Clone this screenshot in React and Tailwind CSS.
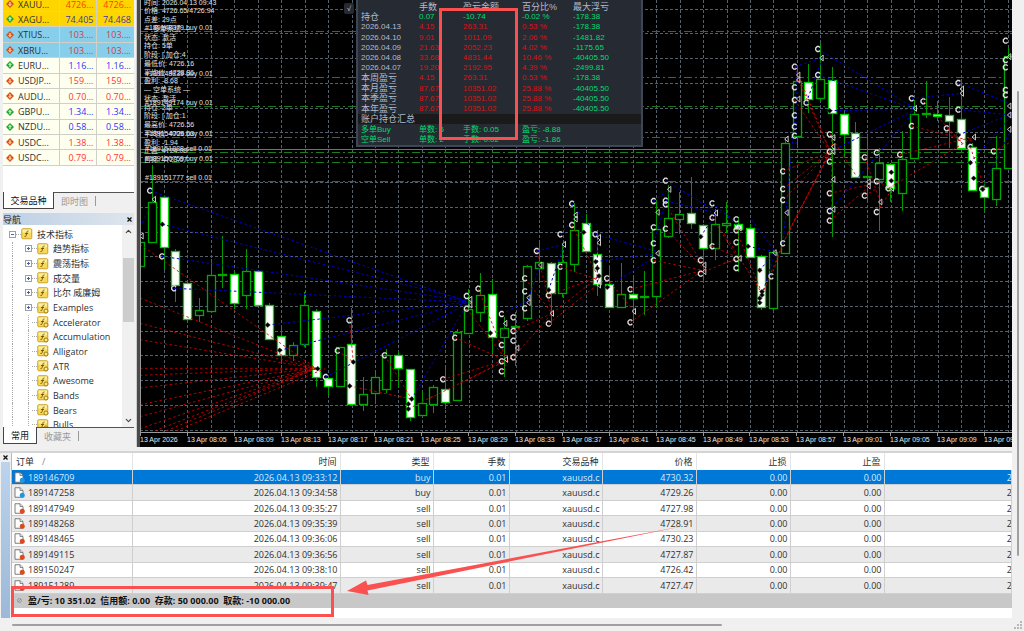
import React from 'react';
import { ChevronUp, ChevronDown } from 'lucide-react';

const quotes = [
  { name: 'XAUU...', bid: '4726...', ask: '4726...', up: false, row: 'bg-[#ffd500]', price: 'text-[#ff3c00]' },
  { name: 'XAGU...', bid: '74.405', ask: '74.468', up: true, row: 'bg-[#ffd500]', price: 'text-[#3a3a9e]' },
  { name: 'XTIUS...', bid: '103....', ask: '103....', up: false, row: 'bg-[#87ceeb]', price: 'text-[#d83a4a]' },
  { name: 'XBRU...', bid: '103....', ask: '103....', up: false, row: 'bg-[#87ceeb]', price: 'text-[#d83a4a]' },
  { name: 'EURU...', bid: '1.16...', ask: '1.16...', up: true, row: 'bg-[#fffff0]', price: 'text-[#3232ff]' },
  { name: 'USDJP...', bid: '159....', ask: '159....', up: false, row: 'bg-[#fffff0]', price: 'text-[#ff3232]' },
  { name: 'AUDU...', bid: '0.70...', ask: '0.70...', up: false, row: 'bg-[#fffff0]', price: 'text-[#ff3232]' },
  { name: 'GBPU...', bid: '1.34...', ask: '1.34...', up: true, row: 'bg-[#fffff0]', price: 'text-[#3232ff]' },
  { name: 'NZDU...', bid: '0.58...', ask: '0.58...', up: true, row: 'bg-[#fffff0]', price: 'text-[#3232ff]' },
  { name: 'USDC...', bid: '1.38...', ask: '1.38...', up: false, row: 'bg-[#fffff0]', price: 'text-[#ff3232]' },
  { name: 'USDC...', bid: '0.79...', ask: '0.79...', up: false, row: 'bg-[#fffff0]', price: 'text-[#ff3232]' },
];

const indicators = [
  { name: '趋势指标', folder: true, expandable: true },
  { name: '震荡指标', folder: true, expandable: true },
  { name: '成交量', folder: true, expandable: true },
  { name: '比尔 威廉姆', folder: true, expandable: true },
  { name: 'Examples', expandable: true },
  { name: 'Accelerator' },
  { name: 'Accumulation' },
  { name: 'Alligator' },
  { name: 'ATR' },
  { name: 'Awesome' },
  { name: 'Bands' },
  { name: 'Bears' },
  { name: 'Bulls' },
];

const stats = [
  ['2026.04.13', '4.15', '263.31', '0.53 %', '-178.38'],
  ['2026.04.10', '9.01', '1011.09', '2.06 %', '-1481.82'],
  ['2026.04.09', '21.63', '2052.23', '4.02 %', '-1175.65'],
  ['2026.04.08', '33.68', '4831.44', '10.46 %', '-40405.50'],
  ['2026.04.07', '19.20', '2192.95', '4.39 %', '-2499.81'],
  ['本周盈亏', '4.15', '263.31', '0.53 %', '-178.38'],
  ['本月盈亏', '87.67', '10351.02', '25.88 %', '-40405.50'],
  ['本季盈亏', '87.67', '10351.02', '25.88 %', '-40405.50'],
  ['本年盈亏', '87.67', '10351.02', '25.88 %', '-40405.50'],
];

const orders = [
  ['189146709', '2026.04.13 09:33:12', 'buy', '4730.32'],
  ['189147258', '2026.04.13 09:34:58', 'buy', '4729.26'],
  ['189147949', '2026.04.13 09:35:27', 'sell', '4727.98'],
  ['189148268', '2026.04.13 09:35:39', 'sell', '4728.91'],
  ['189148465', '2026.04.13 09:36:06', 'sell', '4730.23'],
  ['189149115', '2026.04.13 09:36:56', 'sell', '4727.87'],
  ['189150247', '2026.04.13 09:38:10', 'sell', '4726.42'],
  ['189151289', '2026.04.13 09:39:47', 'sell', '4727.47'],
];

const orderHeads = ['时间', '类型', '手数', '交易品种', '价格', '止损', '止盈'];

// [body top, body bottom, high, low, falling]
const candles = [
  [242, 266, 227, 279, 0], [202, 242, 165, 242, 0], [197, 247, 195, 270, 1], [251, 285, 249, 302, 1],
  [283, 319, 281, 319, 1], [310, 315, 298, 322, 0], [275, 311, 259, 311, 0], [274, 275, 236, 288, 0],
  [274, 303, 272, 309, 1], [271, 295, 249, 309, 0], [271, 305, 271, 305, 1], [305, 339, 303, 340, 1],
  [336, 355, 328, 364, 1], [345, 355, 342, 361, 0], [305, 344, 292, 347, 0], [311, 377, 309, 387, 1],
  [378, 386, 377, 396, 1], [347, 386, 347, 386, 0], [344, 404, 308, 404, 1], [394, 404, 377, 411, 0],
  [377, 393, 373, 404, 0], [355, 389, 349, 393, 0], [355, 368, 351, 388, 1], [369, 417, 369, 421, 1],
  [403, 415, 391, 415, 0], [387, 404, 385, 413, 0], [389, 402, 365, 409, 1], [332, 400, 329, 401, 0],
  [309, 333, 289, 333, 0], [295, 312, 273, 322, 0], [294, 337, 279, 355, 1], [328, 337, 317, 377, 0],
  [326, 327, 312, 366, 0], [266, 318, 265, 321, 0], [262, 268, 240, 282, 0], [263, 293, 262, 325, 1],
  [262, 293, 245, 297, 0], [230, 264, 203, 272, 0], [223, 251, 214, 251, 1], [254, 284, 230, 296, 1],
  [284, 307, 268, 308, 1], [294, 307, 263, 307, 0], [294, 298, 277, 322, 1], [296, 297, 271, 315, 0],
  [229, 296, 200, 308, 0], [218, 236, 185, 238, 0], [214, 219, 192, 234, 0], [213, 223, 177, 229, 1],
  [225, 248, 224, 283, 1], [224, 248, 209, 260, 0], [223, 225, 202, 233, 0], [224, 229, 217, 272, 1],
  [228, 257, 224, 258, 1], [256, 307, 255, 310, 1], [252, 308, 251, 312, 0], [143, 253, 139, 253, 0],
  [81, 136, 65, 147, 0], [82, 99, 64, 113, 1], [79, 98, 43, 102, 0], [80, 113, 67, 237, 1],
  [114, 134, 113, 158, 1], [133, 177, 122, 177, 1], [176, 177, 134, 200, 0], [163, 179, 148, 231, 0],
  [164, 188, 163, 202, 1], [159, 193, 131, 211, 0], [114, 158, 100, 158, 0], [113, 114, 81, 118, 0],
  [114, 116, 101, 121, 1], [115, 121, 97, 148, 1], [119, 148, 79, 148, 1], [147, 190, 143, 191, 1],
  [187, 197, 181, 212, 1], [168, 199, 136, 206, 0], [56, 168, 48, 168, 0],
];

// Trade marks are kept per chart section, in thirds of a pixel from the section's corner
const sections = [
  {
    x: 135,
    y: 150,
    opens: [[45, 122], [117, 415], [81, 319], [643, 511], [608, 602], [572, 681], [749, 616]],
    closes: [[20, 258], [57, 148]],
    dots: [[82, 223], [398, 525], [434, 601], [548, 656], [655, 636], [644, 708], [830, 747], [820, 762], [820, 777]],
    wins: [
      [45, 122, 996, 456], [82, 223, 996, 450], [81, 319, 996, 453], [117, 415, 996, 456], [398, 525, 996, 456],
      [434, 601, 996, 459], [572, 681, 996, 462], [830, 747, 996, 462], [15, 232, 57, 148],
    ],
    losses: [
      [15, 283, 543, 655], [15, 444, 543, 655], [15, 520, 543, 655], [15, 569, 543, 655], [15, 655, 543, 655],
      [15, 676, 543, 655], [15, 714, 543, 655], [15, 764, 543, 656], [15, 800, 543, 656], [15, 836, 543, 656],
      [45, 848, 543, 656], [80, 848, 543, 656], [110, 848, 570, 656], [643, 511, 655, 636], [608, 602, 655, 636],
      [644, 708, 830, 747], [749, 616, 830, 747], [820, 777, 900, 735],
    ],
  },
  {
    x: 430,
    y: 150,
    opens: [
      [110, 438], [110, 476], [145, 416], [75, 563], [39, 688], [215, 492], [215, 585], [215, 634], [215, 664],
      [250, 502], [250, 543], [250, 572], [250, 622], [285, 385], [285, 424], [285, 475], [320, 303], [391, 253],
      [391, 350], [356, 436], [356, 521], [426, 161], [426, 225], [496, 253], [531, 385], [601, 418], [601, 517],
      [671, 153], [671, 232], [671, 280], [671, 331], [707, 92], [707, 152], [707, 163], [707, 236], [812, 331],
      [812, 371], [847, 160], [847, 203], [847, 289],
    ],
    closes: [
      [121, 448], [121, 465], [226, 520], [228, 628], [262, 594], [296, 443], [296, 458], [331, 345], [366, 490],
      [402, 283], [437, 195], [437, 207], [507, 262], [507, 278], [507, 405], [612, 484], [683, 187], [683, 310],
      [718, 118], [823, 345], [823, 365], [858, 189],
    ],
    dots: [[181, 549], [356, 420], [461, 247], [497, 335], [502, 355], [507, 378], [532, 412], [812, 260]],
    wins: [
      [215, 492, 296, 450], [320, 303, 402, 283], [391, 253, 437, 200], [426, 161, 507, 265], [496, 253, 683, 305],
      [497, 335, 683, 310], [532, 412, 683, 315], [671, 153, 718, 118], [707, 92, 858, 185], [707, 152, 858, 189],
      [285, 475, 331, 345], [356, 420, 402, 283], [812, 260, 858, 189], [671, 280, 718, 118], [847, 160, 919, 218],
      [221, 520, 221, 640], [502, 270, 502, 400],
    ],
    losses: [
      [0, 745, 228, 630], [39, 688, 228, 630], [75, 563, 228, 632], [110, 476, 228, 628], [145, 416, 228, 626],
      [90, 700, 250, 622], [250, 543, 366, 490], [250, 622, 366, 490], [285, 385, 366, 490], [320, 303, 366, 490],
      [366, 490, 507, 380], [356, 521, 507, 400], [391, 350, 507, 390], [426, 225, 507, 385], [356, 436, 507, 380],
      [531, 385, 612, 484], [601, 418, 823, 360], [601, 517, 823, 358], [671, 331, 823, 362], [707, 236, 823, 358],
      [707, 163, 823, 352], [847, 289, 929, 325], [847, 203, 919, 318], [823, 365, 920, 325], [215, 664, 262, 594],
    ],
  },
  {
    x: 724,
    y: 0,
    opens: [
      [37, 658], [37, 691], [37, 727], [37, 777], [37, 804], [142, 829], [177, 514], [177, 567], [177, 600],
      [177, 730], [212, 200], [212, 262], [212, 300], [212, 346], [212, 380], [212, 407], [247, 308], [282, 147],
      [282, 225], [317, 403], [317, 455], [317, 485], [317, 580], [317, 633], [317, 662], [422, 472], [422, 587],
      [458, 458], [458, 544], [458, 636], [493, 565], [528, 464], [563, 295], [563, 378], [598, 304], [668, 385],
      [703, 249], [703, 329], [739, 441], [774, 567], [809, 454], [845, 122], [845, 180], [845, 202], [845, 270],
      [845, 285],
    ],
    closes: [
      [47, 775], [47, 684], [152, 758], [188, 417], [188, 638], [223, 225], [223, 240], [223, 297], [293, 174],
      [328, 413], [328, 440], [328, 455], [328, 538], [328, 628], [434, 545], [434, 558], [469, 606], [504, 565],
      [573, 325], [714, 267], [714, 280], [750, 411], [856, 170], [856, 318], [856, 345], [856, 388],
    ],
    dots: [
      [72, 739], [107, 811], [114, 875], [114, 885], [107, 895], [107, 908], [317, 332], [502, 517], [502, 542],
      [703, 405], [739, 488], [749, 535], [776, 568],
    ],
    wins: [
      [83, 660, 152, 752], [72, 739, 152, 755], [107, 811, 152, 758], [114, 885, 152, 762], [177, 730, 223, 240],
      [212, 200, 293, 174], [247, 308, 293, 180], [282, 147, 573, 325], [282, 225, 573, 328], [317, 332, 573, 328],
      [317, 455, 573, 330], [317, 633, 573, 332], [563, 295, 714, 280], [703, 249, 862, 312], [703, 329, 862, 345],
      [703, 405, 862, 342], [739, 488, 862, 348], [774, 567, 862, 388], [0, 640, 47, 684], [216, 200, 216, 440],
    ],
    losses: [
      [0, 700, 114, 880], [0, 790, 47, 775], [37, 691, 114, 880], [177, 514, 317, 455], [177, 600, 317, 455],
      [177, 567, 317, 455], [177, 730, 317, 455], [182, 720, 317, 458], [190, 700, 317, 462], [212, 200, 317, 450],
      [223, 240, 317, 452], [212, 300, 317, 455], [142, 829, 177, 730], [114, 885, 177, 730], [317, 403, 395, 525],
      [317, 580, 434, 555], [317, 662, 434, 560], [323, 403, 323, 640], [422, 472, 469, 606], [422, 587, 469, 560],
      [458, 544, 504, 565], [458, 636, 504, 568], [493, 565, 750, 411], [528, 464, 750, 411], [563, 378, 750, 425],
      [598, 304, 720, 435], [668, 385, 714, 430], [739, 441, 780, 560], [809, 454, 862, 425], [320, 403, 330, 460],
    ],
  },
];

const timeLabels = [
  '13 Apr 2026', '13 Apr 08:05', '13 Apr 08:09', '13 Apr 08:13', '13 Apr 08:17', '13 Apr 08:21', '13 Apr 08:25',
  '13 Apr 08:29', '13 Apr 08:33', '13 Apr 08:37', '13 Apr 08:41', '13 Apr 08:45', '13 Apr 08:49', '13 Apr 08:53',
  '13 Apr 08:57', '13 Apr 09:01', '13 Apr 09:05', '13 Apr 09:09', '13 Apr 09:13',
];

const openOrders = [
  { y: 31, text: '#189148079 buy 0.01' },
  { y: 77, text: '#189148839 buy 0.01' },
  { y: 106, text: '#189149174 buy 0.01' },
  { y: 137, text: '#189154009 buy 0.01' },
  { y: 152, text: '#189151888 sell 0.01' },
  { y: 162, text: '#189150759 buy 0.01' },
  { y: 181, text: '#189151777 sell 0.01' },
];

const comments = [
  '时间: 2026.04.13 09:43', '价格: 4726.65/4726.94', '点差: 29点', '— 多单系统 —', '状态: 激活', '持仓: 5单',
  '阶段: [ 加仓:4', '最低价: 4726.16', '平均价: 4728.36', '盈利: -8.68', '— 空单系统 —', '状态: 激活', '持仓: 2单',
  '阶段: [ 加仓:1', '最高价: 4726.56', '平均价: 4726.03', '盈利: -1.94', '止盈: 4724.08', '目标: 4723.07',
];

function QuoteIcon({ up }) {
  return (
    <svg className="block size-2" viewBox="0 0 16 16">
      <path d="M8 0L16 8L8 16L0 8Z" fill={up ? '#26a53a' : '#d8501e'} />
      {up ? (
        <path d="M8 3L12 8H9.500V12H6.500V8H4Z" fill="#b8f0b0" />
      ) : (
        <path d="M8 13L12 8H9.500V4H6.500V8H4Z" fill="#ffc090" />
      )}
    </svg>
  );
}

function IndicatorIcon({ folder }) {
  return (
    <svg className="block size-3 shrink-0" viewBox="0 0 24 24">
      <rect x="1.500" y="1.500" width="20" height="20" rx="2" fill="#f7d858" stroke="#c9a227" strokeWidth="2" />
      <path d="M3 3h17v6H3z" fill="#fdeea0" />
      <path d="M15 6c-3-1-3 2-4 6s-1 6-4 5M8 11h6" fill="none" stroke="#6b5200" strokeWidth="1.8" />
      {!folder && <circle cx="18" cy="18" r="4" fill="#ffe98a" stroke="#a07c10" strokeWidth="2" />}
    </svg>
  );
}

function ExpandBox({ open }) {
  return (
    <svg className="block size-[7px] shrink-0" viewBox="0 0 7 7" shapeRendering="crispEdges">
      <rect x="0.5" y="0.5" width="6" height="6" fill="#fff" stroke="#a0a0a0" />
      <path d={open ? 'M2 3.500H5' : 'M2 3.500H5M3.500 2V5'} stroke="#4060b0" />
    </svg>
  );
}

function DocIcon({ type }) {
  return (
    <svg className="block h-[11px] w-[11px] shrink-0" viewBox="0 0 22 22">
      <path d="M2 1.500H12L18 7V20.500H2Z" fill="#fff" stroke="#6e6e6e" strokeWidth="1.8" />
      <path d="M12 1.500V7H18" fill="#ddd" stroke="#6e6e6e" strokeWidth="1.500" />
      <circle cx="16.500" cy="16.500" r="5" fill={type === 'buy' ? '#2196e0' : '#dc4a1e'} />
    </svg>
  );
}

function CloseMark() {
  return (
    <svg className="block size-[5px]" viewBox="0 0 5 5">
      <path d="M0.500 0.500L4.500 4.500M4.500 0.500L0.500 4.500" stroke="#111" strokeWidth="1.300" />
    </svg>
  );
}

function MarketWatch() {
  return (
    <section className="ml-[3px] flex h-[210px] flex-col">
      <div className="h-[193px] overflow-hidden border-b border-[#555] bg-white">
        <table className="-mt-[3px] h-[169px] w-full table-fixed border-collapse text-[9px] leading-none text-[#303030]">
          <colgroup>
            <col className="w-[56px]" />
            <col className="w-[37px]" />
            <col />
          </colgroup>
          <tbody>
            {quotes.map((q, i) => (
              <tr key={i} className={`border-b border-[#d0d0c8] ${q.row}`}>
                <td className="border-r border-[#d0d0c8] p-0">
                  <div className="flex items-center gap-1 pl-[3px]">
                    <QuoteIcon up={q.up} />
                    <span>{q.name}</span>
                  </div>
                </td>
                <td className={`border-r border-[#d0d0c8] py-0 pr-[2px] pl-0 text-right ${q.price}`}>{q.bid}</td>
                <td className={`py-0 pr-[3px] pl-0 text-right ${q.price}`}>{q.ask}</td>
              </tr>
            ))}
          </tbody>
        </table>
      </div>
      <div className="flex h-4 text-[9px] leading-none">
        <button className="-mt-px w-[51px] border border-t-0 border-[#444] bg-white text-[#111]">交易品种</button>
        <button className="w-[41px] text-[#999]">即时图</button>
        <span className="my-[3px] w-px bg-[#999]" />
      </div>
    </section>
  );
}

function Navigator() {
  return (
    <section className="mt-[3px] ml-[3px]">
      <header className="flex h-3 items-center justify-between bg-linear-to-r from-[#bcd0e6] to-[#dfe5ec] pr-px text-[9px] leading-none text-[#222]">
        <h2>导航</h2>
        <button className="flex size-2 items-center justify-center" aria-label="关闭">
          <CloseMark />
        </button>
      </header>
      <div className="flex h-[203px] overflow-hidden border-b border-[#555] bg-white">
        <ul className="mt-[2px] grid h-[205px] flex-1 auto-rows-fr text-[9px] leading-none text-[#303030]">
          <li className="flex items-center pl-[6px]">
            <ExpandBox open />
            <span className="w-[5px] border-t border-dotted border-[#aaa]" />
            <IndicatorIcon folder />
            <span className="pl-1">技术指标</span>
          </li>
          {indicators.map((item) => (
            <li key={item.name} className="flex items-center pl-[9px]">
              <span className="mr-[12px] h-full border-l border-dotted border-[#aaa]" />
              {item.expandable ? (
                <ExpandBox />
              ) : (
                <span className="mx-[3px] h-full w-px border-l border-dotted border-[#aaa]" />
              )}
              <span className="w-[5px] border-t border-dotted border-[#aaa]" />
              <IndicatorIcon folder={item.folder} />
              <span className="pl-1 whitespace-nowrap">{item.name}</span>
            </li>
          ))}
        </ul>
        <div className="flex w-3 flex-col items-center bg-[#f0f0f0] py-[2px]">
          <ChevronUp className="size-[9px] text-[#444]" strokeWidth={3} />
          <div className="mt-[22px] mb-auto h-[64px] w-[11px] bg-[#cdcdcd]" />
          <ChevronDown className="size-[9px] text-[#444]" strokeWidth={3} />
        </div>
      </div>
      <div className="flex h-4 text-[9px] leading-none">
        <button className="-mt-px w-[34px] border border-t-0 border-[#444] bg-white text-[#111]">常用</button>
        <button className="w-[41px] text-[#999]">收藏夹</button>
        <span className="my-[3px] w-px bg-[#999]" />
      </div>
    </section>
  );
}

function Marks({ section }) {
  const px = (v) => section.x + v / 3;
  const py = (v) => section.y + v / 3;
  return (
    <g fill="none">
      <g strokeDasharray="2.500 2.500">
        {section.wins.map(([a, b, c, d], i) => (
          <line key={i} x1={px(a)} y1={py(b)} x2={px(c)} y2={py(d)} stroke="#0000d0" />
        ))}
        {section.losses.map(([a, b, c, d], i) => (
          <line key={i} x1={px(a)} y1={py(b)} x2={px(c)} y2={py(d)} stroke="#d00000" strokeOpacity="0.85" />
        ))}
      </g>
      {section.opens.map(([a, b], i) => (
        <path
          key={i}
          d="M2 -1.500L0.800 -2.500H-0.800L-2.300 -1V1L-0.800 2.500H0.800L2 1.500"
          transform={`translate(${px(a)} ${py(b)})`}
          stroke="#e0e0e0"
          strokeWidth="1.300"
        />
      ))}
      {section.closes.map(([a, b], i) => (
        <path
          key={i}
          d="M1.500 -3V3L-2 0Z"
          transform={`translate(${px(a)} ${py(b)})`}
          stroke="#c8c8c8"
          strokeWidth="1"
        />
      ))}
      {section.dots.map(([a, b], i) => (
        <path
          key={i}
          d="M0 -2.500L2.500 0L0 2.500L-2.500 0Z"
          transform={`translate(${px(a)} ${py(b)})`}
          fill="#000"
          stroke="#444"
          strokeWidth="0.500"
        />
      ))}
    </g>
  );
}

function PriceChart() {
  return (
    <svg
      className="block h-[447px] w-full bg-black font-['Liberation_Sans','Noto_Sans_CJK_SC',sans-serif] text-[7px]"
      viewBox="140 0 872 447"
      preserveAspectRatio="xMinYMin slice"
    >
      <g stroke="#55606c" strokeDasharray="3 2">
        {Array.from({ length: 37 }, (_, i) => {
          const x = Math.round(140.6 + (i + 1) * 23.44) + 0.5;
          return <line key={i} x1={x} y1="0" x2={x} y2="432" />;
        })}
        {Array.from({ length: 18 }, (_, i) => {
          const y = Math.round(8.6 + i * 24.77) + 0.5;
          return <line key={i} x1="140" y1={y} x2="1012" y2={y} />;
        })}
      </g>
      <line x1="140" y1="149.500" x2="1012" y2="149.500" stroke="#66727e" />
      {openOrders.map((o) => (
        <line key={o.y} x1="140" y1={o.y + 0.5} x2="1012" y2={o.y + 0.5} stroke="#1c7a1c" strokeDasharray="8 3 2 3" />
      ))}
      {candles.map(([top, bottom, high, low, falling], i) => {
        const x = Math.round(140.300 + i * 11.72) + 0.5;
        return (
          <g key={i}>
            <line x1={x} y1={high} x2={x} y2={low} stroke="#009a00" />
            <rect
              x={x - 4}
              y={top + 0.5}
              width="8"
              height={bottom - top}
              fill={falling ? '#fff' : '#000'}
              stroke={falling ? '#00d800' : '#00a800'}
              strokeWidth="1.300"
            />
          </g>
        );
      })}
      {sections.map((s) => (
        <Marks key={s.x} section={s} />
      ))}
      <g fill="#e0e0e0">
        {comments.map((c, i) => (
          <text key={i} x="144" y={Math.round(4.500 + i * 8.75)}>{c}</text>
        ))}
        {openOrders.map((o) => (
          <text key={o.y} x="145" y={o.y - 1}>{o.text}</text>
        ))}
      </g>
      <rect x="140" y="433" width="872" height="14" fill="#000" />
      <path d="M140.500 0V433M140 432.500H1012" stroke="#999" fill="none" />
      {timeLabels.map((label, i) => {
        const x = Math.round(140 + i * 46.88);
        return (
          <g key={label}>
            <line x1={x + 0.5} y1="433" x2={x + 0.5} y2="436" stroke="#999" />
            <text x={x} y="442" fill="#e8e8e8">{label}</text>
          </g>
        );
      })}
    </svg>
  );
}

function StatsPanel() {
  return (
    <div className="absolute top-0 left-[216px] h-[147px] w-[287px] border-2 border-t-0 border-[#3c4654] bg-[#262a32]">
      <table className="mt-[2px] h-[143px] w-full table-fixed border-collapse text-left font-['Liberation_Sans','Noto_Sans_CJK_SC',sans-serif] text-[8px] leading-none whitespace-nowrap text-[#00dc6e] [&_td]:p-0 [&_th]:p-0 [&_th]:font-normal [&_tr]:h-[10px]">
        <colgroup>
          <col className="w-[61px]" />
          <col className="w-[44px]" />
          <col className="w-[59px]" />
          <col className="w-[51px]" />
          <col />
        </colgroup>
        <thead>
          <tr className="text-[9px] text-[#b4bccc]">
            <td />
            <th>手数</th>
            <th>盈亏金额</th>
            <th>百分比%</th>
            <th>最大浮亏</th>
          </tr>
        </thead>
        <tbody>
          <tr>
            <td><div className="pl-[3px] text-[9px] text-[#b4bccc]">持仓</div></td>
            <td>0.07</td>
            <td>-10.74</td>
            <td>-0.02 %</td>
            <td>-178.38</td>
          </tr>
          {stats.map(([label, lots, profit, pct, drawdown]) => (
            <tr key={label}>
              <td>
                <div className={`pl-[3px] text-[#b4bccc] ${label.startsWith('本') ? 'text-[9px]' : ''}`}>{label}</div>
              </td>
              <td className="text-[#d81414]">{lots}</td>
              <td className="text-[#d81414]">{profit}</td>
              <td className="text-[#d81414]">{pct}</td>
              <td>{drawdown}</td>
            </tr>
          ))}
          <tr className="bg-[#1a1a1a] text-[9px] text-[#b4bccc]">
            <td colSpan={5}><div className="pl-[3px]">账户持仓汇总</div></td>
          </tr>
          <tr>
            <td><div className="pl-[3px]">多单Buy</div></td>
            <td>单数: 5</td>
            <td>手数: 0.05</td>
            <td colSpan={2}>盈亏: -8.88</td>
          </tr>
          <tr>
            <td><div className="pl-[3px]">空单Sell</div></td>
            <td>单数: 2</td>
            <td>手数: 0.02</td>
            <td colSpan={2}>盈亏: -1.86</td>
          </tr>
        </tbody>
      </table>
    </div>
  );
}

function Terminal() {
  return (
    <section className="relative flex h-[167px] border-t-2 border-[#d4d4d4]">
      <div className="flex w-3 shrink-0 flex-col items-center border-r border-[#bbb]">
        <button className="flex h-[9px] w-full items-center justify-center" aria-label="关闭">
          <CloseMark />
        </button>
        <div className="w-[9px] flex-1 bg-linear-to-b from-[#bcd3ec] to-[#9db8d8]" />
      </div>
      <div className="min-w-0 flex-1 bg-white">
        <table className="h-[155px] w-full table-fixed border-collapse text-right text-[9px] leading-none whitespace-nowrap text-[#303030] [&_td]:py-0 [&_td]:pl-0 [&_th]:py-0 [&_th]:font-normal">
          <colgroup>
            <col className="w-[120px]" />
            <col className="w-[208px]" />
            <col className="w-[93px]" />
            <col className="w-[76px]" />
            <col className="w-[93px]" />
            <col className="w-[94px]" />
            <col className="w-[94px]" />
            <col className="w-[94px]" />
            <col />
          </colgroup>
          <thead>
            <tr className="h-[17px]">
              <th className="border-r border-[#e4e4e4] pl-1 text-left">
                订单<span className="pl-2 text-[#888]">/</span>
              </th>
              {orderHeads.map((h) => (
                <th key={h} className="border-r border-[#e4e4e4] pr-[3px]">{h}</th>
              ))}
              <td />
            </tr>
          </thead>
          <tbody>
            {orders.map(([id, time, type, price], i) => {
              const tone = i === 0 ? 'bg-[#0078d7] text-[#d8ecff]' : i % 2 ? 'bg-[#eaeaea]' : 'bg-white';
              return (
                <tr
                  key={id}
                  className={`border-b border-[#cfcfcf] ${tone} [&_td]:border-r [&_td]:border-[#cfcfcf] [&_td]:pr-[2px]`}
                >
                  <td>
                    <div className="flex items-center gap-[3px] pl-[2px]">
                      <DocIcon type={type} />
                      <span>{id}</span>
                    </div>
                  </td>
                  <td>{time}</td>
                  <td>{type}</td>
                  <td>0.01</td>
                  <td>xauusd.c</td>
                  <td>{price}</td>
                  <td>0.00</td>
                  <td>0.00</td>
                  <td className="overflow-hidden">
                    <div className="-mr-2">20</div>
                  </td>
                </tr>
              );
            })}
            <tr className="bg-[#c8c8c8] text-left font-bold text-[#111]">
              <td colSpan={9}>
                <div className="flex h-[11px] items-center gap-[6px] pl-[5px]">
                  <svg className="block size-[5px]" viewBox="0 0 10 10">
                    <circle cx="5" cy="5" r="4" fill="none" stroke="#888" strokeWidth="1.500" />
                    <path d="M2 8L8 2" stroke="#888" strokeWidth="1.500" />
                  </svg>
                  <span>盈/亏: 10 351.02&nbsp; 信用额: 0.00&nbsp; 存款: 50 000.00&nbsp; 取款: -10 000.00</span>
                </div>
              </td>
            </tr>
          </tbody>
        </table>
      </div>
      <div className="absolute top-[133px] left-[11px] h-[31px] w-[323px] border-[3px] border-[#fa5050]" />
      <svg className="absolute top-[69px] left-[345px] h-[76px] w-[345px]" viewBox="345 522 345 76">
        <path d="M347 591L366 580.500L367.500 585L684 526L367.500 590.500L368.500 595Z" fill="#fa5050" />
      </svg>
    </section>
  );
}

export default function App() {
  return (
    <div className="flex min-h-screen overflow-hidden bg-[#f0f0f0] font-['Open_Sans','Noto_Sans_CJK_SC',sans-serif]">
      <main className="flex min-w-0 flex-1 flex-col">
        <div className="flex h-[447px]">
          <aside className="w-[137px] shrink-0 border-r border-[#ccc] pr-[2px]">
            <MarketWatch />
            <Navigator />
          </aside>
          <div className="relative min-w-0 flex-1 overflow-hidden border-l-[3px] border-[#4a4a4a]">
            <PriceChart />
            <button className="absolute top-[3px] left-[204px] h-[11px] w-[10px] rounded-xs bg-[#262a32] text-[7px] leading-none text-[#b4bccc]">
              √
            </button>
            <StatsPanel />
            <div className="absolute top-2 left-[299px] h-[132px] w-[79px] border-[3px] border-[#fa5050]" />
          </div>
        </div>
        <div className="mt-[4px] mb-[6px]">
          <Terminal />
        </div>
        <div className="ml-3 h-[2px] w-[710px] max-w-full rounded-full bg-[#a0a0a0]" />
      </main>
      <div className="flex w-3 shrink-0 flex-col items-center justify-between pt-[91px] pb-[2px]">
        <div className="h-[465px] w-[2px] rounded-full bg-[#a0a0a0]" />
        <svg className="block size-2" viewBox="0 0 8 8" fill="#b8b8b8">
          <path d="M6 0h2v2H6zM6 3h2v2H6zM3 3h2v2H3zM6 6h2v2H6zM3 6h2v2H3zM0 6h2v2H0z" />
        </svg>
      </div>
    </div>
  );
}
